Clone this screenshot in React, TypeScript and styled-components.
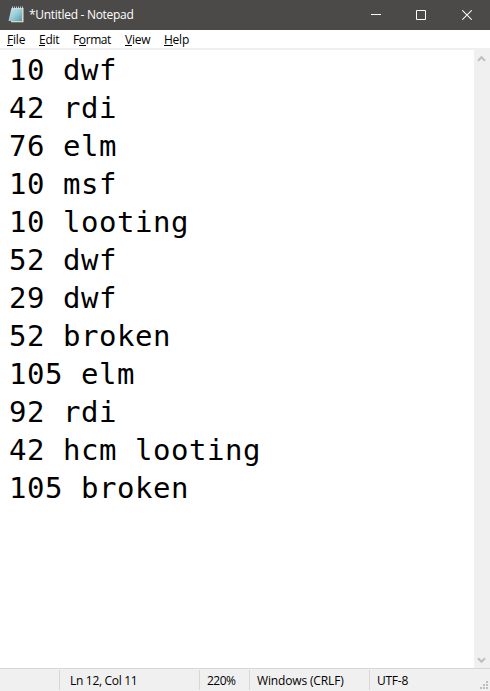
import React from "react";
import styled, { createGlobalStyle } from "styled-components";

const GlobalStyle = createGlobalStyle`
  *, *::before, *::after { box-sizing: border-box; }
  body { margin: 0; background: #fff; overflow: hidden; }
`;

const Window = styled.div`
  width: 490px;
  height: 691px;
  display: flex;
  flex-direction: column;
  background: #fff;
  color: #000;
  font: 12px/16px "Open Sans", "Noto Sans", sans-serif;
`;

const TitleBar = styled.header`
  flex: none;
  height: 30px;
  display: flex;
  align-items: center;
  padding-left: 8px;
  background: #4c4a48;
  color: #fff;
`;

const Title = styled.div`
  flex: 1;
  padding-left: 5px;
  letter-spacing: -0.3px;
  white-space: nowrap;
`;

const WindowButton = styled.button`
  width: 45px;
  height: 30px;
  padding: 0;
  border: 0;
  display: flex;
  align-items: center;
  justify-content: center;
  background: transparent;
  color: #fff;
  &:last-child { width: 46px; }
`;

const MenuBar = styled.nav`
  flex: none;
  height: 20px;
  display: flex;
  align-items: center;
  border-bottom: 2px solid #f0f0f0;
`;

const MenuItem = styled.div<{ $width: number; $spacing: number }>`
  width: ${(p) => p.$width}px;
  padding: 2px 0 0 7px;
  letter-spacing: ${(p) => p.$spacing}px;
  white-space: nowrap;
`;

const AccessKey = styled.span`
  display: inline-block;
  height: 14px;
  line-height: 16px;
  border-bottom: 1px solid #000;
`;

const Editor = styled.main`
  flex: 1;
  min-height: 0;
  display: flex;
`;

const TextArea = styled.div`
  flex: 1;
  padding: 1px 0 0 9px;
  font: 29px/38px "DejaVu Sans Mono", "Liberation Mono", monospace;
  letter-spacing: 0.54px;
`;

const Line = styled.div`
  height: 38px;
  white-space: pre;
`;

const ScrollBar = styled.div`
  width: 16px;
  display: flex;
  flex-direction: column;
  justify-content: space-between;
  align-items: center;
  padding: 5px 1px 4px 0;
  background: #f0f0f0;
  color: #bfbfbf;
`;

const StatusBar = styled.footer`
  flex: none;
  height: 23px;
  display: flex;
  border-top: 1px solid #d7d7d7;
  background: #f0f0f0;
`;

const StatusCell = styled.div<{ $width?: number; $pad?: number; $spacing?: number }>`
  ${(p) => (p.$width ? `width: ${p.$width}px;` : "flex: 1;")}
  height: 20px;
  margin-top: 1px;
  padding: 3px 0 0 ${(p) => p.$pad ?? 7}px;
  border-right: 1px solid ${(p) => (p.$width ? "#d7d7d7" : "transparent")};
  letter-spacing: ${(p) => p.$spacing ?? 0}px;
  white-space: nowrap;
`;

const Grip = styled.svg`
  align-self: flex-end;
  margin: 0 2px 2px 0;
`;

const NotepadIcon = () => (
  <svg width="16" height="18" viewBox="0 0 16 18">
    <defs>
      <linearGradient id="page" x1="0" y1="0" x2="1" y2="1">
        <stop offset="0" stopColor="#c9e6ed" />
        <stop offset=".5" stopColor="#9bcdd9" />
        <stop offset="1" stopColor="#4e9bb0" />
      </linearGradient>
    </defs>
    <path d="M4 2h11.5v14H3z" fill="#e9dfcc" />
    <path d="M3.4 2.2h11L14 15H.5z" fill="url(#page)" />
    <path d="M4.5 .5v2.5M6.5 .5v2.5M8.5 .5v2.5M10.5 .5v2.5M12.5 .5v2.5M14.5 .5v2.5" stroke="#dfe8ea" strokeWidth=".8" />
    <path d="M3 16.2h12.5" stroke="#b5a98f" strokeWidth=".6" />
  </svg>
);

const Chevron = ({ down = false }: { down?: boolean }) => (
  <svg width="9" height="7" viewBox="0 0 9 7" fill="none" stroke="currentColor" strokeWidth="2">
    <path d={down ? "M1 1.3l3.5 3.5L8 1.3" : "M1 5.7l3.5-3.5L8 5.7"} />
  </svg>
);

const menus = [
  { label: "File", key: 0, width: 32, spacing: -0.2 },
  { label: "Edit", key: 0, width: 34, spacing: -0.25 },
  { label: "Format", key: 1, width: 52, spacing: -0.4 },
  { label: "View", key: 0, width: 39, spacing: -0.25 },
  { label: "Help", key: 0, width: 40, spacing: -0.25 },
];

const lines = [
  "10 dwf", "42 rdi", "76 elm", "10 msf", "10 looting", "52 dwf",
  "29 dwf", "52 broken", "105 elm", "92 rdi", "42 hcm looting", "105 broken",
];

const gripDots = [[6, 0], [3, 3], [6, 3], [0, 6], [3, 6], [6, 6]];

export default function App() {
  return (
    <Window>
      <GlobalStyle />
      <TitleBar>
        <NotepadIcon />
        <Title>*Untitled - Notepad</Title>
        <WindowButton aria-label="Minimize">
          <svg width="11" height="10" shapeRendering="crispEdges"><path d="M0 4h10v1H0z" fill="currentColor" /></svg>
        </WindowButton>
        <WindowButton aria-label="Maximize">
          <svg width="11" height="12"><path d="M.5 1.5h9v9h-9z" fill="none" stroke="currentColor" /></svg>
        </WindowButton>
        <WindowButton aria-label="Close">
          <svg width="10" height="12"><path d="M.3 1.3l9.4 9.4M9.7 1.3l-9.4 9.4" stroke="currentColor" strokeWidth="1.1" /></svg>
        </WindowButton>
      </TitleBar>
      <MenuBar>
        {menus.map((m) => (
          <MenuItem key={m.label} $width={m.width} $spacing={m.spacing}>
            {m.label.slice(0, m.key)}
            <AccessKey>{m.label[m.key]}</AccessKey>
            {m.label.slice(m.key + 1)}
          </MenuItem>
        ))}
      </MenuBar>
      <Editor>
        <TextArea>
          {lines.map((text, i) => <Line key={i}>{text}</Line>)}
        </TextArea>
        <ScrollBar>
          <Chevron />
          <Chevron down />
        </ScrollBar>
      </Editor>
      <StatusBar>
        <StatusCell $width={60} />
        <StatusCell $width={140} $pad={10} $spacing={-0.3}>Ln 12, Col 11</StatusCell>
        <StatusCell $width={50} $spacing={-0.5}>220%</StatusCell>
        <StatusCell $width={120} $spacing={-0.15}>Windows (CRLF)</StatusCell>
        <StatusCell $spacing={-0.25}>UTF-8</StatusCell>
        <Grip width="8" height="8" shapeRendering="crispEdges">
          {gripDots.map(([x, y]) => (
            <rect key={`${x}-${y}`} x={x} y={y} width="2" height="2" fill="#bfbfbf" />
          ))}
        </Grip>
      </StatusBar>
    </Window>
  );
}
